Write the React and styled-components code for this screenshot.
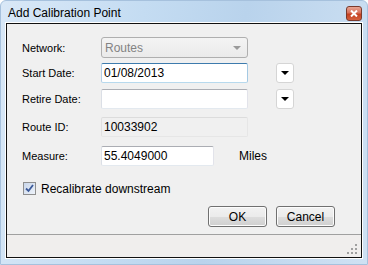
import React from "react";
import styled, { createGlobalStyle } from "styled-components";

const Global = createGlobalStyle`
  html, body { margin: 0; padding: 0; background: #fff; }
  body { font-family: "Liberation Sans", Arial, sans-serif; font-size: 11px; color: #000; }
`;

const Window = styled.div`
  width: 368px;
  height: 265px;
  box-sizing: border-box;
  display: flex;
  flex-direction: column;
  padding: 0 5px 6px 5px;
  background: linear-gradient(100deg, #d9e8f7 0%, #c4dcf2 35%, #b9d3ec 60%, #cfe1f3 100%);
  border: 1px solid #a6c1dd;
  border-radius: 6px 6px 0 0;
`;

const TitleBar = styled.div`
  height: 21px;
  display: flex;
  align-items: center;
  justify-content: space-between;
  padding-left: 2px;
`;

const Title = styled.span`
  font-size: 12px;
  color: #000;
  margin-top: 2px;
`;

const CloseButton = styled.div`
  width: 16px;
  height: 15px;
  margin-top: 4px;
  box-sizing: border-box;
  border: 1px solid #7a3a2c;
  border-radius: 3px;
  background: linear-gradient(#e8a593 0%, #d7705a 45%, #c5401f 55%, #d3603d 100%);
  display: flex;
  align-items: center;
  justify-content: center;
`;

const Client = styled.div`
  flex: 1;
  display: flex;
  flex-direction: column;
  background: #f0f0f0;
  border: 1px solid #111;
  box-shadow: 0 0 0 1px #fff;
  margin-top: 1px;
`;

const Form = styled.div`
  flex: 1;
  padding: 13px 0 0 15px;
  display: flex;
  flex-direction: column;
`;

const Row = styled.div`
  display: flex;
  align-items: center;
  height: ${p => p.$h || 20}px;
  margin-top: ${p => p.$top || 0}px;
`;

const Label = styled.span`
  width: 79px;
  flex: none;
`;

const TextBox = styled.div`
  width: ${p => p.$w || 147}px;
  height: 20px;
  box-sizing: border-box;
  flex: none;
  display: flex;
  align-items: center;
  padding-left: 2px;
  border: 1px solid;
  border-radius: 2px;
  border-color: ${p => p.$focus ? "#3d7bad #a4c9e3 #b7d9ed #b5cfe7" : "#abadb3 #e2e3ea #e3e9ef #dbdfe6"};
  background: ${p => p.$readOnly ? "#f0f0f0" : "#fff"};
  ${p => p.$readOnly && "border-color: #dcdcdc #e6e6e6 #e6e6e6 #e0e0e0;"}
  font-size: 12px;
`;

const Combo = styled.div`
  width: 147px;
  height: 21px;
  box-sizing: border-box;
  display: flex;
  align-items: center;
  justify-content: space-between;
  padding: 0 6px 0 3px;
  border: 1px solid #afafaf;
  border-radius: 3px;
  background: linear-gradient(#f4f4f4, #eaeaea);
  color: #838383;
  font-size: 12px;
`;

const Arrow = styled.span`
  width: 0;
  height: 0;
  border-left: 4px solid transparent;
  border-right: 4px solid transparent;
  border-top: 4px solid ${p => p.$color || "#000"};
`;

const DropButton = styled.div`
  width: 18px;
  height: 20px;
  box-sizing: border-box;
  margin-left: 28px;
  display: flex;
  align-items: center;
  justify-content: center;
  border: 1px solid #d5d5d5;
  border-radius: 3px;
  background: #fff;
`;

const Unit = styled.span`
  margin-left: 25px;
  font-size: 12px;
`;

const CheckRow = styled.label`
  display: flex;
  align-items: center;
  margin-top: 16px;
  margin-left: 1px;
  height: 13px;
  font-size: 12px;
`;

const CheckBox = styled.span`
  width: 13px;
  height: 13px;
  box-sizing: border-box;
  border: 1px solid #8f8f8f;
  background: linear-gradient(135deg, #c9d6ea, #eef3fa);
  margin-right: 5px;
  display: flex;
  align-items: center;
  justify-content: center;
`;

const ButtonBar = styled.div`
  display: flex;
  justify-content: flex-end;
  gap: 9px;
  padding-right: 26px;
  margin-top: 11px;
`;

const Button = styled.button`
  width: 59px;
  height: 21px;
  box-sizing: border-box;
  padding: 0;
  border: 1px solid #707070;
  border-radius: 3px;
  background: linear-gradient(#f2f2f2 0%, #ebebeb 50%, #dddddd 51%, #cfcfcf 100%);
  box-shadow: inset 0 0 0 1px #fcfcfc;
  font-family: "Liberation Sans", Arial, sans-serif;
  font-size: 12px;
  color: #000;
`;

const StatusStrip = styled.div`
  height: 20px;
  border-top: 1px solid #a0a0a0;
  background: #f0eeed;
  display: flex;
  justify-content: flex-end;
  align-items: flex-end;
  padding: 0 3px 2px 0;
`;

function Grip() {
  const dots = [[8, 0], [4, 4], [8, 4], [0, 8], [4, 8], [8, 8]];
  return (
    <svg width="11" height="11" viewBox="0 0 11 11">
      {dots.map(([x, y]) => (
        <rect key={x + "-" + y} x={x} y={y} width="2" height="2" fill="#a0a0a0" />
      ))}
    </svg>
  );
}

export default function App() {
  return (
    <>
      <Global />
      <Window>
        <TitleBar>
          <Title>Add Calibration Point</Title>
          <CloseButton>
            <svg width="8" height="7" viewBox="0 0 8 7">
              <path d="M1 0.5 L7 6.5 M7 0.5 L1 6.5" stroke="#fff" strokeWidth="2" />
            </svg>
          </CloseButton>
        </TitleBar>
        <Client>
          <Form>
            <Row $h={21}>
              <Label>Network:</Label>
              <Combo>
                <span>Routes</span>
                <Arrow $color="#9a9a9a" />
              </Combo>
            </Row>
            <Row $top={5}>
              <Label>Start Date:</Label>
              <TextBox $focus>01/08/2013</TextBox>
              <DropButton><Arrow /></DropButton>
            </Row>
            <Row $top={6}>
              <Label>Retire Date:</Label>
              <TextBox />
              <DropButton><Arrow /></DropButton>
            </Row>
            <Row $top={8}>
              <Label>Route ID:</Label>
              <TextBox $readOnly>10033902</TextBox>
            </Row>
            <Row $top={9}>
              <Label>Measure:</Label>
              <TextBox $w={113}>55.4049000</TextBox>
              <Unit>Miles</Unit>
            </Row>
            <CheckRow>
              <CheckBox>
                <svg width="9" height="9" viewBox="0 0 9 9">
                  <path d="M1 4.5 L3.5 7 L8 1" stroke="#3c5a9a" strokeWidth="1.8" fill="none" />
                </svg>
              </CheckBox>
              Recalibrate downstream
            </CheckRow>
            <ButtonBar>
              <Button>OK</Button>
              <Button>Cancel</Button>
            </ButtonBar>
          </Form>
          <StatusStrip>
            <Grip />
          </StatusStrip>
        </Client>
      </Window>
    </>
  );
}
